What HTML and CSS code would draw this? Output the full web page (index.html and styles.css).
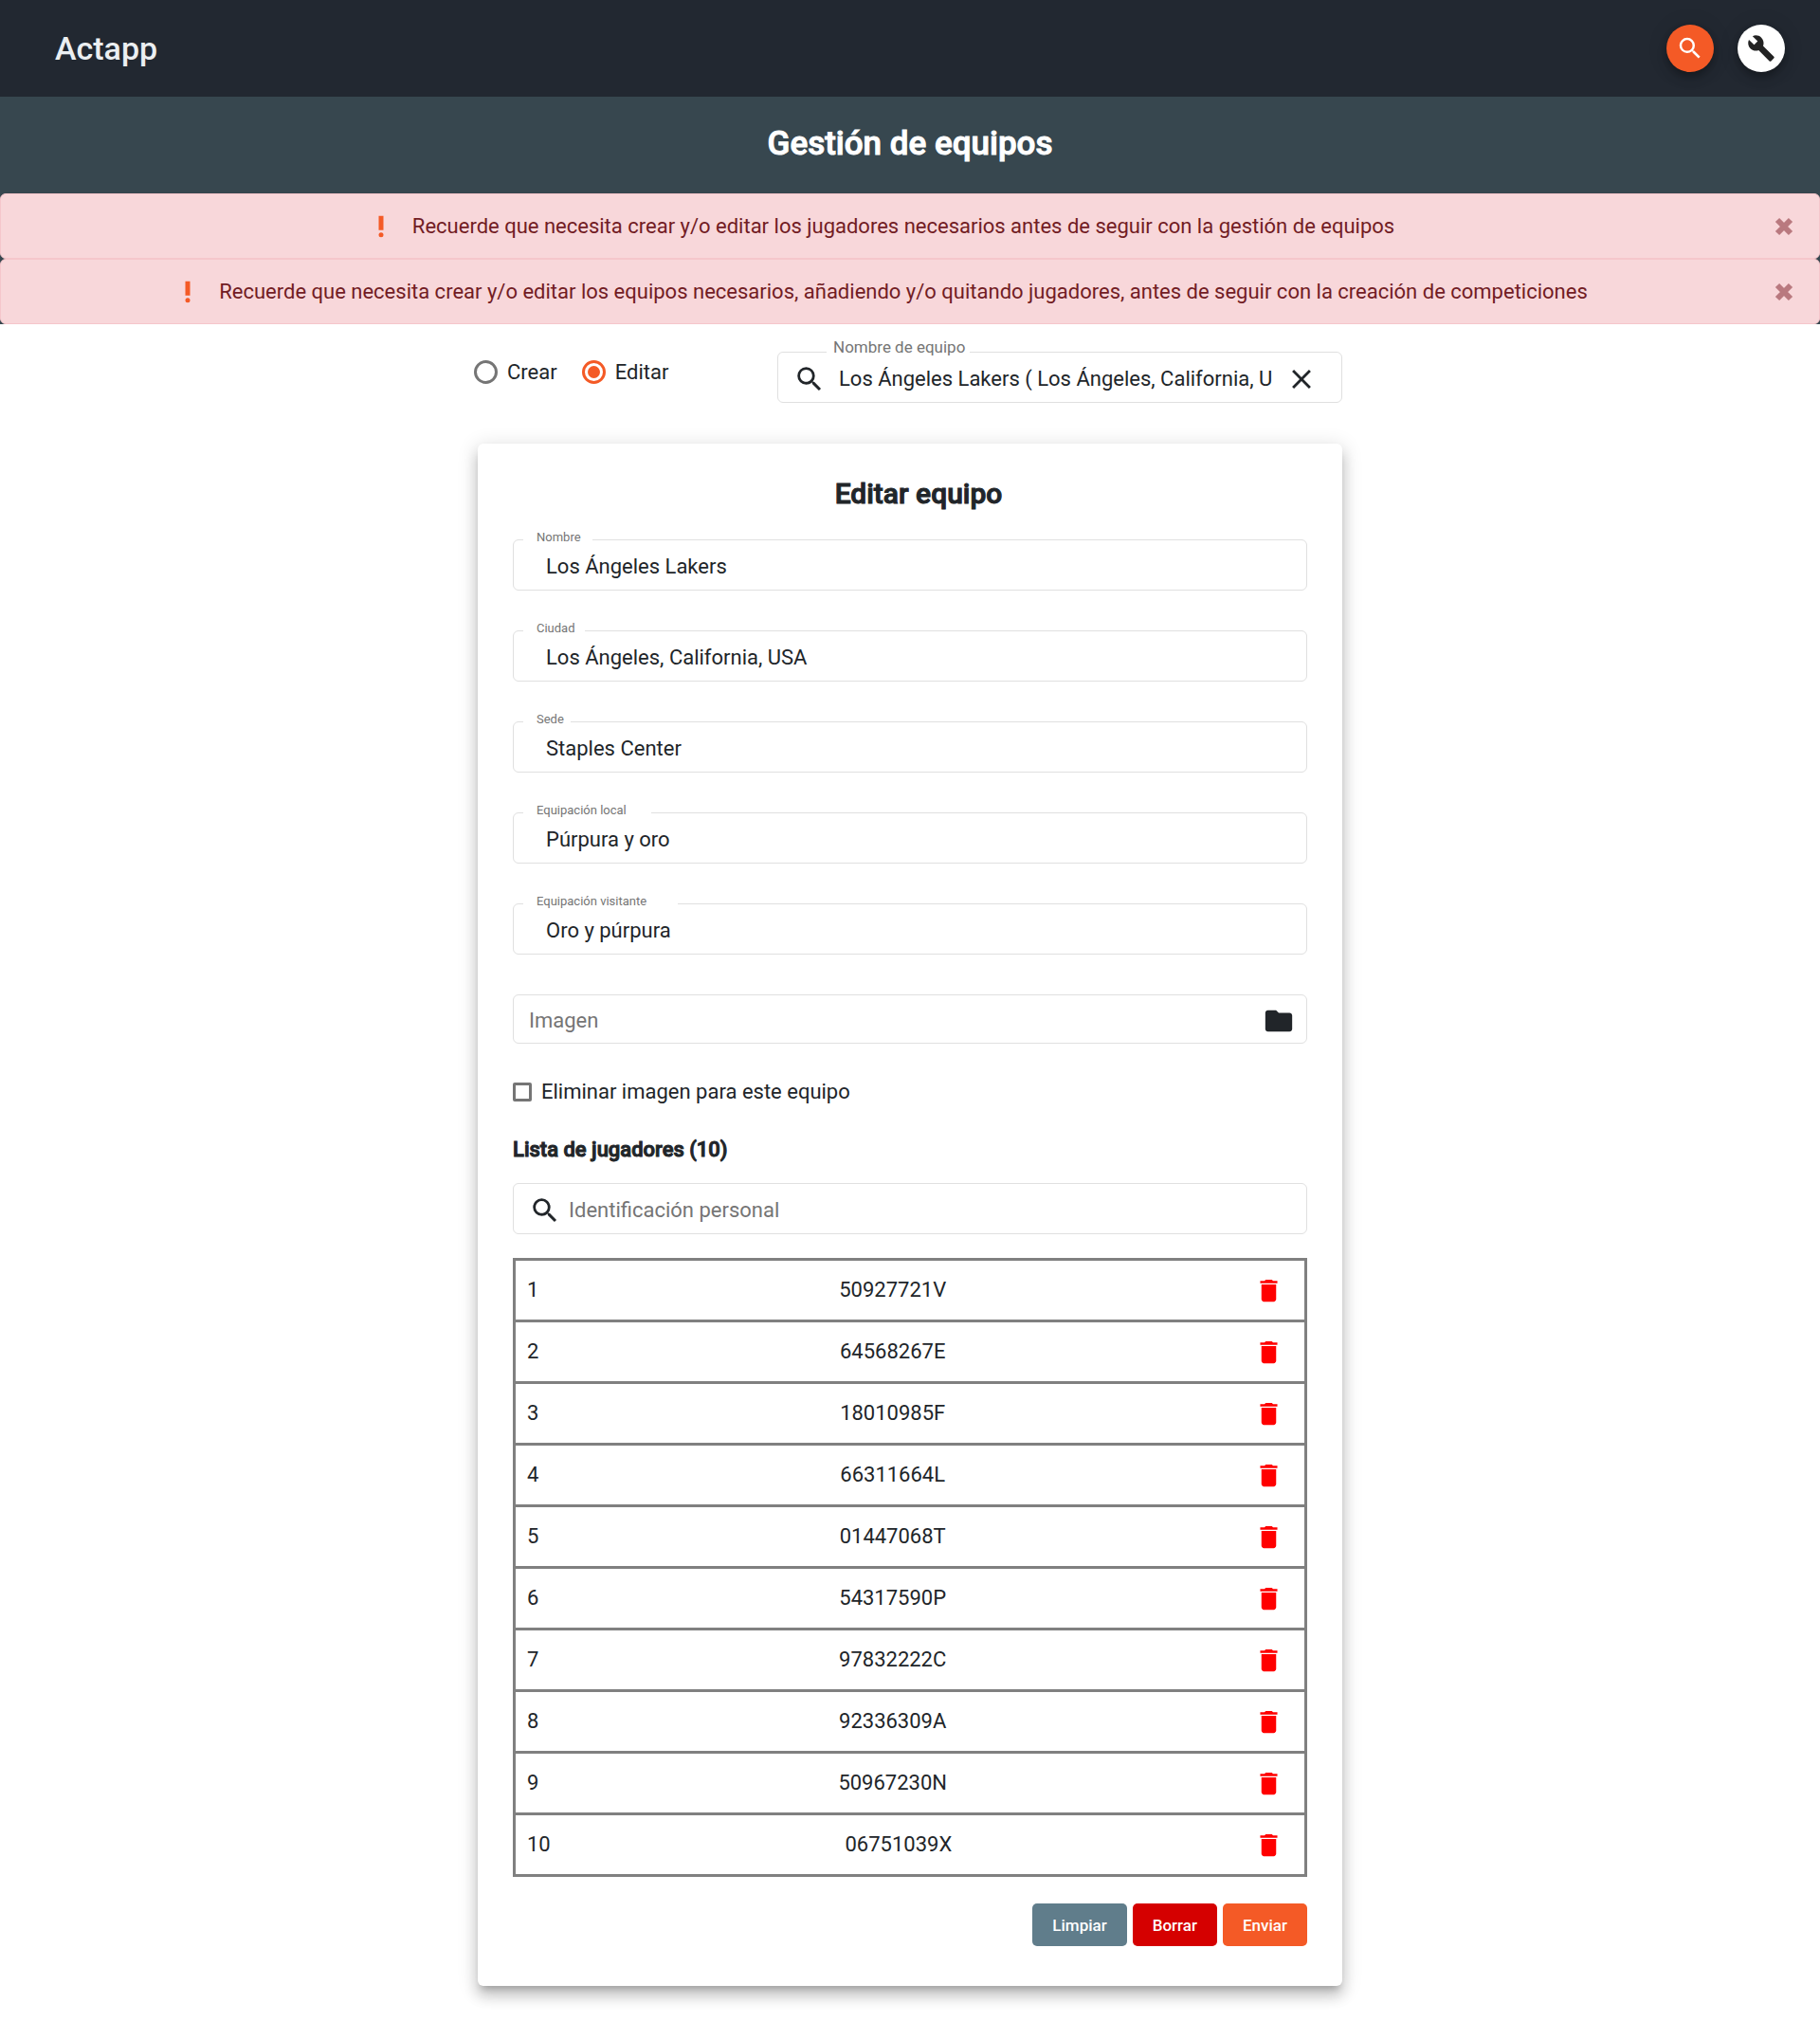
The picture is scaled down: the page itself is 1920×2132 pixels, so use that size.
FILE: index.html
```html
<!DOCTYPE html>
<html lang="es">
<head>
<meta charset="utf-8">
<meta name="viewport" content="width=device-width, initial-scale=1">
<title>Actapp</title>
<link rel="stylesheet" href="styles.css">
</head>
<body>
<svg class="sprite" aria-hidden="true">
  <symbol id="search" viewBox="0 0 24 24"><path d="M15.5 14h-.79l-.28-.27A6.471 6.471 0 0 0 16 9.5 6.5 6.5 0 1 0 9.5 16c1.61 0 3.09-.59 4.23-1.57l.27.28v.79l5 4.99L20.49 19l-4.99-5zm-6 0C7.01 14 5 11.99 5 9.5S7.01 5 9.5 5 14 7.01 14 9.5 11.99 14 9.5 14z"/></symbol>
  <symbol id="build" viewBox="0 0 24 24"><path d="M22.7 19l-9.1-9.1c.9-2.3.4-5-1.5-6.9-2-2-5-2.4-7.4-1.3L9 6 6 9 1.6 4.7C.4 7.1.9 10.1 2.9 12.1c1.9 1.9 4.6 2.4 6.9 1.5l9.1 9.1c.4.4 1 .4 1.4 0l2.3-2.3c.5-.4.5-1.1.1-1.4z"/></symbol>
  <symbol id="priority" viewBox="0 0 24 24"><circle cx="12" cy="19" r="2"/><path d="M10 3h4v12h-4z"/></symbol>
  <symbol id="dismiss" viewBox="0 0 24 24"><path d="M5 5l14 14M19 5L5 19" fill="none" stroke="currentColor" stroke-width="6"/></symbol>
  <symbol id="clear" viewBox="0 0 24 24"><path d="M19 6.41L17.59 5 12 10.59 6.41 5 5 6.41 10.59 12 5 17.59 6.41 19 12 13.41 17.59 19 19 17.59 13.41 12z"/></symbol>
  <symbol id="folder" viewBox="0 0 24 24"><path d="M10 4H4c-1.1 0-1.99.9-1.99 2L2 18c0 1.1.9 2 2 2h16c1.1 0 2-.9 2-2V8c0-1.1-.9-2-2-2h-8l-2-2z"/></symbol>
  <symbol id="trash" viewBox="0 0 24 24"><path d="M6 19c0 1.1.9 2 2 2h8c1.1 0 2-.9 2-2V7H6v12zM19 4h-3.5l-1-1h-5l-1 1H5v2h14V4z"/></symbol>
</svg>

<header class="topbar">
  <a class="brand" href="#">Actapp</a>
  <nav class="actions">
    <button class="fab fab-primary" type="button" aria-label="Buscar"><svg class="icon"><use href="#search"/></svg></button>
    <button class="fab" type="button" aria-label="Herramientas"><svg class="icon"><use href="#build"/></svg></button>
  </nav>
</header>

<section class="band">
  <h1 class="page-title">Gestión de equipos</h1>
  <div class="alert" role="alert">
    <svg class="icon alert-icon"><use href="#priority"/></svg>
    <span>Recuerde que necesita crear y/o editar los jugadores necesarios antes de seguir con la gestión de equipos</span>
    <button class="alert-close" type="button" aria-label="Cerrar"><svg><use href="#dismiss"/></svg></button>
  </div>
  <div class="alert" role="alert">
    <svg class="icon alert-icon"><use href="#priority"/></svg>
    <span>Recuerde que necesita crear y/o editar los equipos necesarios, añadiendo y/o quitando jugadores, antes de seguir con la creación de competiciones</span>
    <button class="alert-close" type="button" aria-label="Cerrar"><svg><use href="#dismiss"/></svg></button>
  </div>
</section>

<main class="content">
  <div class="toolbar">
    <div class="modes">
      <label class="choice"><input class="radio" type="radio" name="modo">Crear</label>
      <label class="choice"><input class="radio" type="radio" name="modo" checked>Editar</label>
    </div>
    <div class="field team-search">
      <label class="notch notch-large" for="equipo">Nombre de equipo</label>
      <svg class="field-icon"><use href="#search"/></svg>
      <input class="control" id="equipo" type="text" value="Los Ángeles Lakers ( Los Ángeles, California, USA )">
      <button class="icon-button" type="button" aria-label="Limpiar búsqueda"><svg class="field-icon"><use href="#clear"/></svg></button>
    </div>
  </div>

  <form class="card">
    <h2 class="card-title">Editar equipo</h2>
    <div class="fields">
      <div class="field">
        <label class="notch notch-nombre" for="nombre">Nombre</label>
        <input class="control" id="nombre" type="text" value="Los Ángeles Lakers">
      </div>
      <div class="field">
        <label class="notch notch-ciudad" for="ciudad">Ciudad</label>
        <input class="control" id="ciudad" type="text" value="Los Ángeles, California, USA">
      </div>
      <div class="field">
        <label class="notch notch-sede" for="sede">Sede</label>
        <input class="control" id="sede" type="text" value="Staples Center">
      </div>
      <div class="field">
        <label class="notch notch-local" for="local">Equipación local</label>
        <input class="control" id="local" type="text" value="Púrpura y oro">
      </div>
      <div class="field">
        <label class="notch notch-visitante" for="visitante">Equipación visitante</label>
        <input class="control" id="visitante" type="text" value="Oro y púrpura">
      </div>
      <div class="field field-file">
        <input class="control" type="text" placeholder="Imagen" aria-label="Imagen">
        <button class="icon-button" type="button" aria-label="Elegir imagen"><svg class="field-icon"><use href="#folder"/></svg></button>
      </div>
    </div>

    <label class="choice remove-image"><input class="checkbox" type="checkbox">Eliminar imagen para este equipo</label>

    <h3 class="list-title">Lista de jugadores (10)</h3>
    <div class="field player-search">
      <svg class="field-icon"><use href="#search"/></svg>
      <input class="control" type="text" placeholder="Identificación personal" aria-label="Identificación personal">
    </div>

    <table class="players">
      <tbody>
        <tr><td>1</td><td>50927721V</td><td><button class="delete" type="button" aria-label="Quitar"><svg><use href="#trash"/></svg></button></td></tr>
        <tr><td>2</td><td>64568267E</td><td><button class="delete" type="button" aria-label="Quitar"><svg><use href="#trash"/></svg></button></td></tr>
        <tr><td>3</td><td>18010985F</td><td><button class="delete" type="button" aria-label="Quitar"><svg><use href="#trash"/></svg></button></td></tr>
        <tr><td>4</td><td>66311664L</td><td><button class="delete" type="button" aria-label="Quitar"><svg><use href="#trash"/></svg></button></td></tr>
        <tr><td>5</td><td>01447068T</td><td><button class="delete" type="button" aria-label="Quitar"><svg><use href="#trash"/></svg></button></td></tr>
        <tr><td>6</td><td>54317590P</td><td><button class="delete" type="button" aria-label="Quitar"><svg><use href="#trash"/></svg></button></td></tr>
        <tr><td>7</td><td>97832222C</td><td><button class="delete" type="button" aria-label="Quitar"><svg><use href="#trash"/></svg></button></td></tr>
        <tr><td>8</td><td>92336309A</td><td><button class="delete" type="button" aria-label="Quitar"><svg><use href="#trash"/></svg></button></td></tr>
        <tr><td>9</td><td>50967230N</td><td><button class="delete" type="button" aria-label="Quitar"><svg><use href="#trash"/></svg></button></td></tr>
        <tr><td>10</td><td>06751039X</td><td><button class="delete" type="button" aria-label="Quitar"><svg><use href="#trash"/></svg></button></td></tr>
      </tbody>
    </table>

    <div class="buttons">
      <button class="btn btn-clear" type="reset">Limpiar</button>
      <button class="btn btn-delete" type="button">Borrar</button>
      <button class="btn btn-send" type="submit">Enviar</button>
    </div>
  </form>
</main>
</body>
</html>
```

FILE: styles.css
```css
:root {
  --ink: #212529;
  --muted: #757575;
  --line: #e0e0e0;
  --orange: #f45a26;
}

*, *::before, *::after { box-sizing: border-box; }

body {
  margin: 0;
  background: #fff;
  color: var(--ink);
  font: 400 22px/30px Roboto, sans-serif;
}

button, input {
  margin: 0;
  padding: 0;
  border: 0;
  background: none;
  color: inherit;
  font: inherit;
}

svg { display: block; fill: currentColor; }
.sprite { position: absolute; width: 0; height: 0; }
.icon { width: 30px; height: 30px; }

/* Header */
.topbar {
  display: flex;
  align-items: center;
  justify-content: space-between;
  height: 102px;
  padding: 0 37px 0 58px;
  background: #222831;
}
.brand {
  color: #eceff1;
  font-size: 34px;
  font-weight: 500;
  line-height: 40px;
  text-decoration: none;
}
.actions { display: flex; gap: 25px; }
.fab {
  display: grid;
  place-items: center;
  width: 50px;
  height: 50px;
  border-radius: 50%;
  background: #fff;
  color: #222;
  box-shadow: 0 4px 6px -1px rgba(0, 0, 0, .2), 0 7px 12px rgba(0, 0, 0, .14), 0 1px 22px rgba(0, 0, 0, .12);
}
.fab-primary { background: var(--orange); color: #fff; }

/* Title band with alerts */
.band { background: #37474f; }
.page-title, .card-title, .list-title {
  margin: 0;
  font-weight: 500;
  -webkit-text-stroke: 1px currentColor;
}
.page-title {
  padding: 30px 0 32px;
  color: #fff;
  font-size: 35px;
  line-height: 40px;
  text-align: center;
}
.alert {
  position: relative;
  display: flex;
  align-items: center;
  justify-content: center;
  gap: 18px;
  min-height: 69px;
  padding: 18px 91px 18px 29px;
  border: 1px solid #f5c6cb;
  border-radius: 6px;
  background: #f8d7da;
  color: #721c24;
}
.alert-icon { flex: none; color: var(--orange); }
.alert-close {
  position: absolute;
  top: 0;
  right: 25px;
  height: 100%;
  color: #b9797f;
}
.alert-close svg { width: 24px; height: 24px; }

/* Mode and team selection */
.content {
  width: min(912px, 100% - 32px);
  margin: 0 auto;
  padding: 29px 0 38px;
}
.toolbar {
  display: flex;
  justify-content: space-between;
  align-items: flex-start;
  margin-bottom: 43px;
}
.modes { display: flex; gap: 26px; margin-left: -4px; line-height: 43px; }
.choice { display: flex; align-items: center; gap: 10px; }
.radio {
  appearance: none;
  width: 25px;
  height: 25px;
  padding: 3px;
  border: 3px solid var(--muted);
  border-radius: 50%;
}
.radio:checked { border-color: var(--orange); background: var(--orange) content-box; }
.checkbox {
  appearance: none;
  width: 20px;
  height: 20px;
  border: 3px solid var(--muted);
  border-radius: 2px;
}

/* Outlined fields */
.field {
  position: relative;
  display: flex;
  align-items: center;
  height: 54px;
  padding: 4px 34px 0;
  border: 1px solid var(--line);
  border-radius: 6px;
}
.control {
  flex: 1;
  min-width: 0;
  height: 30px;
  outline: 0;
}
.control::placeholder { color: var(--muted); opacity: 1; }
.field-icon { flex: none; width: 34px; height: 34px; }
.notch {
  position: absolute;
  top: -12px;
  left: 10px;
  padding-left: 14px;
  background: #fff;
  color: var(--muted);
  font-size: 13px;
  line-height: 17px;
  white-space: nowrap;
}
.notch-nombre { width: 73px; }
.notch-ciudad { width: 65px; }
.notch-sede { width: 50px; }
.notch-local { width: 135px; }
.notch-visitante { width: 163px; }
.notch-large {
  top: -16px;
  left: 51px;
  width: 151px;
  padding-left: 7px;
  font-size: 17px;
  line-height: 20px;
}
.team-search { width: 596px; padding: 4px 25px 0 16px; gap: 14px; }
.field-file { height: 52px; padding: 3px 12px 0 16px; }
.player-search { padding: 3px 16px 0; gap: 8px; }

/* Card */
.card {
  padding: 33px 37px 42px;
  border-radius: 6px;
  background: #fff;
  box-shadow: 0 7px 7px -4px rgba(0, 0, 0, .2), 0 11px 14px 1px rgba(0, 0, 0, .14), 0 4px 20px 3px rgba(0, 0, 0, .12);
}
.card-title {
  padding-left: 18px;
  margin-bottom: 28px;
  font-size: 30px;
  line-height: 40px;
  text-align: center;
}
.fields { display: grid; gap: 42px; }
.remove-image { margin-top: 36px; }
.list-title { margin: 31px 0 20px; font-size: 22px; }

/* Players */
.players {
  display: block;
  margin: 25px 0 28px;
  border: 3px solid #808080;
}
.players tbody { display: block; }
.players tr {
  display: flex;
  align-items: center;
  justify-content: space-between;
  height: 65px;
  padding: 0 13px 0 12px;
  border-bottom: 3px solid #808080;
}
.players tr:last-child { height: 62px; border-bottom: 0; }
.players td { padding: 0; }
.delete {
  display: grid;
  place-items: center;
  width: 48px;
  height: 48px;
  color: #f00;
}
.delete svg { width: 31px; height: 31px; }

.buttons { display: flex; justify-content: flex-end; gap: 6px; }
.btn {
  height: 45px;
  padding: 0 21px;
  border-radius: 5px;
  color: #fff;
  font-size: 17px;
  font-weight: 500;
}
.btn-clear { background: #607d8b; }
.btn-delete { background: #d50000; }
.btn-send { background: var(--orange); }
```
